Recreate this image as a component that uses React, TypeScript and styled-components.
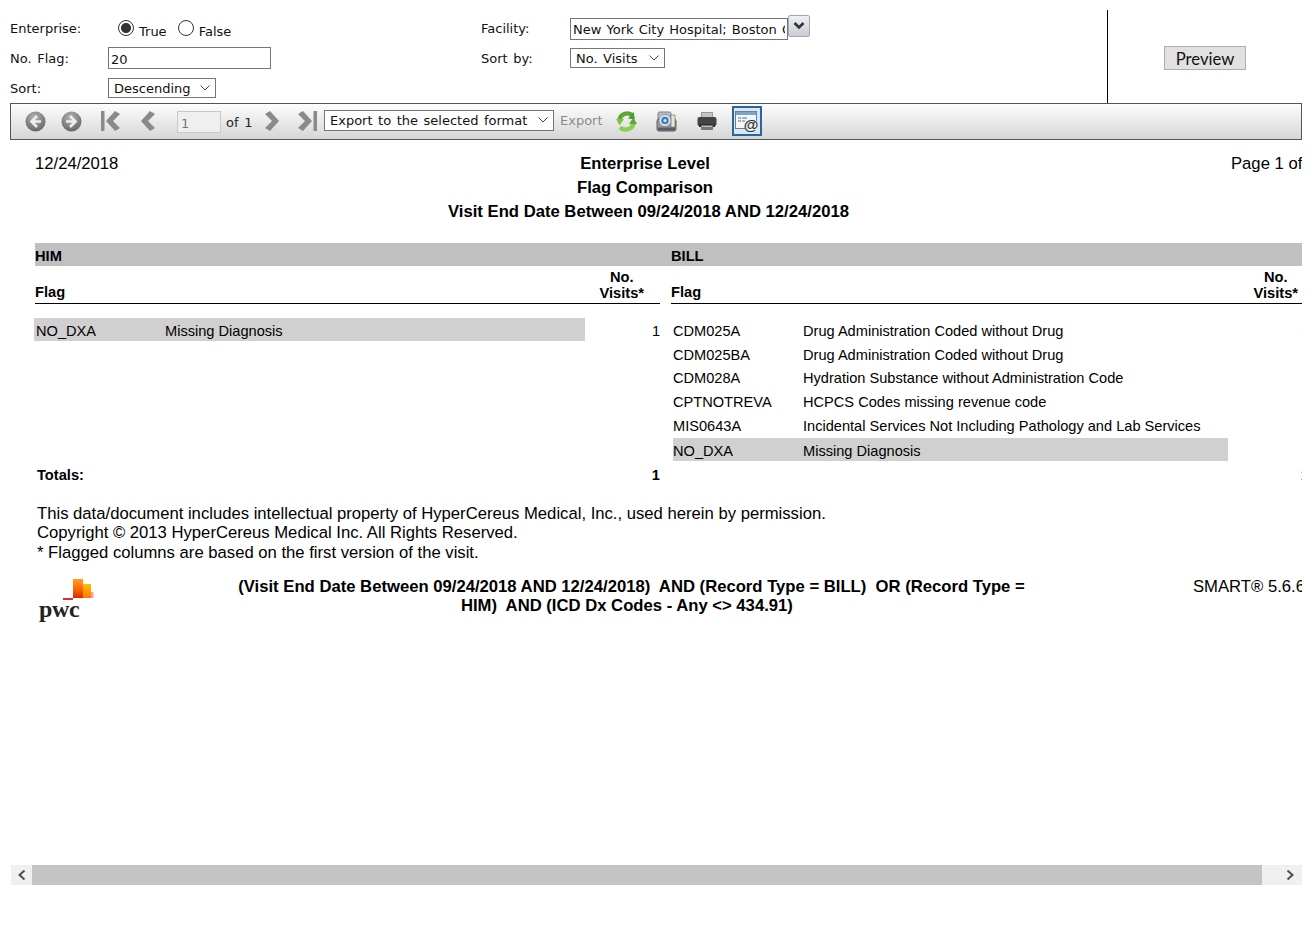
import React from 'react'
import styled, { createGlobalStyle } from 'styled-components'

const GlobalStyle = createGlobalStyle`
  html, body {
    margin: 0;
    padding: 0;
    background: #fff;
    overflow: hidden;
  }
`

const Page = styled.div`
  width: 1302px;
  height: 937px;
  padding: 10px 0 0 10px;
  box-sizing: border-box;
  overflow: hidden;
`

const Params = styled.div`
  display: flex;
  height: 93px;
  font-family: 'DejaVu Sans', Verdana, sans-serif;
  font-size: 13px;
  word-spacing: 1.5px;
  color: #111;
`

const ParamGrid = styled.div`
  width: 1097px;
  padding-top: 3px;
  box-sizing: border-box;
  display: grid;
  grid-template-columns: 98px 373px 89px 1fr;
  grid-auto-rows: 30px;
  align-items: center;
`

const Label = styled.label`
  display: block;
`

const RadioRow = styled.div`
  display: flex;
  align-items: center;
  padding: 2px 0 0 10px;
`

const Radio = styled.input.attrs({ type: 'radio' })`
  appearance: none;
  width: 16px;
  height: 16px;
  margin: 0 5px 0 0;
  box-sizing: border-box;
  border: 1px solid #333;
  border-radius: 50%;
  background: #fff;
  position: relative;
  top: -1px;
  &:checked {
    background: radial-gradient(circle, #333 0 4.6px, #fff 5.4px);
  }
`

const RadioText = styled.span<{ $gap?: number }>`
  margin-right: ${p => p.$gap ?? 0}px;
  padding-top: 5px;
`

const TextInput = styled.input`
  display: block;
  width: ${p => p.width}px;
  height: 22px;
  box-sizing: border-box;
  border: 1px solid #767676;
  border-radius: 0;
  padding: 2px 2px 0;
  font: 13px 'DejaVu Sans', Verdana, sans-serif;
  word-spacing: 1px;
  color: #111;
  outline: none;
`

const FacilityRow = styled.div`
  display: flex;
  align-items: flex-start;
  padding-top: 1px;
`

const DropButton = styled.div`
  width: 22px;
  height: 22px;
  margin-top: -3px;
  box-sizing: border-box;
  border: 1px solid #a6a6ae;
  border-radius: 2px;
  background: linear-gradient(#f0f0f4, #c9ccd6);
  display: flex;
  align-items: center;
  justify-content: center;
`

const chevronUri =
  "url(\"data:image/svg+xml,%3Csvg xmlns='http://www.w3.org/2000/svg' width='10' height='6'%3E%3Cpath d='M0.5 0.5 L5 5 L9.5 0.5' fill='none' stroke='%23444' stroke-width='1'/%3E%3C/svg%3E\")"

const Select = styled.select<{ $w: number }>`
  display: block;
  appearance: none;
  width: ${p => p.$w}px;
  height: 20px;
  box-sizing: border-box;
  border: 1px solid #767676;
  border-radius: 0;
  padding: 0 5px;
  background: #fff ${chevronUri} no-repeat right 5px center;
  font: 13px 'DejaVu Sans', Verdana, sans-serif;
  word-spacing: 1.4px;
  color: #111;
  outline: none;
`

const PreviewPane = styled.div`
  flex: 1;
  border-left: 1px solid #000;
  display: flex;
  align-items: center;
  justify-content: center;
`

const PreviewButton = styled.button`
  width: 82px;
  height: 24px;
  margin-top: 3px;
  padding: 2px 0 0;
  box-sizing: border-box;
  border: 1px solid #adadad;
  background: #e1e1e1;
  font: 16.67px Lato, 'Open Sans', sans-serif;
  color: #111;
`

const Toolbar = styled.div`
  height: 37px;
  box-sizing: border-box;
  border: 1px solid #555;
  padding-bottom: 1px;
  background: linear-gradient(#fdfdfd, #d6d6d6);
  display: flex;
  align-items: center;
  font-family: 'DejaVu Sans', Verdana, sans-serif;
  font-size: 13px;
  color: #222;
`

const ToolSlot = styled.div<{ $x: number; $w: number; $on?: boolean }>`
  margin-left: ${p => p.$x}px;
  width: ${p => p.$w}px;
  flex: none;
  display: flex;
  align-items: center;
  justify-content: center;
  ${p => p.$on && `
    height: 30px;
    box-sizing: border-box;
    border: 2px solid #2b6699;
    background: #d6e8f7;
  `}
`

const PageInput = styled.input`
  width: 44px;
  height: 22px;
  margin: 2px 0 0 20px;
  flex: none;
  box-sizing: border-box;
  border: 1px solid #c8c8c8;
  background: #efefef;
  padding: 2px 3px 0;
  font: 13px 'DejaVu Sans', Verdana, sans-serif;
  color: #777;
  outline: none;
`

const OfText = styled.span`
  margin-left: 5px;
  width: 26px;
  flex: none;
  padding-top: 2px;
  word-spacing: 1.5px;
  white-space: nowrap;
`

const ExportLink = styled.span`
  margin: -2px 0 0 6px;
  width: 43px;
  flex: none;
  color: #8c8c8c;
`

const ExportSelect = styled(Select)`
  margin: -2px 0 0 7px;
  height: 21px;
  flex: none;
`

const Viewport = styled.div`
  height: 725px;
  overflow: hidden;
`

const Report = styled.div`
  width: 1320px;
  padding-top: 12px;
  font-family: 'Liberation Sans', Arial, sans-serif;
  color: #000;
`

const TitleBlock = styled.div`
  display: grid;
  grid-template-columns: 25px 195px 830px 1fr;
  font-size: 16.67px;
  line-height: 24px;
`

const DateText = styled.div`
  grid-column: 2;
`

const Titles = styled.div`
  grid-column: 3;
  text-align: center;
  font-weight: bold;
`

const TitleLine = styled.div<{ $shift?: number }>`
  padding-left: ${p => p.$shift ?? 0}px;
  white-space: nowrap;
`

const PageText = styled.div`
  grid-column: 4;
  padding-left: 171px;
  white-space: nowrap;
`

const Sections = styled.div`
  margin-top: 19px;
  margin-left: 25px;
  display: grid;
  grid-template-columns: 636px 638px;
`

const Section = styled.div`
  display: flex;
  flex-direction: column;
`

const Band = styled.div`
  height: 23px;
  line-height: 26px;
  background: #c0c0c0;
  font-size: 14.67px;
  font-weight: bold;
`

const HeadRow = styled.div<{ $end: number; $pad: number }>`
  height: 38px;
  box-sizing: border-box;
  margin-right: ${p => p.$end}px;
  padding-right: ${p => p.$pad}px;
  border-bottom: 1px solid #000;
  display: flex;
  justify-content: space-between;
  align-items: flex-end;
  font-size: 14.67px;
  font-weight: bold;
  line-height: 16px;
  padding-bottom: 3px;
`

const VisitsHead = styled.div`
  text-align: center;
  margin-bottom: -1px;
`

const Rows = styled.div`
  margin-top: 14px;
`

const Row = styled.div<{ $off: number; $end: number; $drop?: boolean }>`
  display: flex;
  height: 23.7px;
  margin-top: ${p => (p.$drop ? 1.5 : 0)}px;
  margin-left: ${p => p.$off}px;
  margin-right: ${p => p.$end}px;
  font-size: 14.6px;
  line-height: 26px;
`

const RowLabel = styled.div<{ $w: number; $on?: boolean; $codeW: number; $pad: number }>`
  display: grid;
  grid-template-columns: ${p => p.$codeW}px 1fr;
  width: ${p => p.$w}px;
  height: 23px;
  padding-left: ${p => p.$pad}px;
  box-sizing: border-box;
  background: ${p => (p.$on ? '#d0d0d0' : 'transparent')};
  white-space: nowrap;
`

const RowValue = styled.div`
  flex: 1;
  text-align: right;
`

const TotalRow = styled.div<{ $end: number }>`
  margin-top: 1px;
  height: 24px;
  line-height: 24px;
  margin-right: ${p => p.$end}px;
  padding-left: 2px;
  display: flex;
  justify-content: space-between;
  font-size: 14.67px;
  font-weight: bold;
`

const LeftTotal = styled(TotalRow)`
  margin-top: auto;
`

const Notice = styled.div`
  margin: 17px 0 0 27px;
  font-size: 16.67px;
  line-height: 19.5px;
`

const Footer = styled.div`
  margin-top: 15px;
  display: grid;
  grid-template-columns: 223px 797px 1fr;
`

const LogoBox = styled.div`
  padding-left: 53px;
  position: relative;
  height: 48px;
`

const LogoText = styled.span`
  position: absolute;
  left: 29px;
  top: 20px;
  font-family: 'Liberation Serif', serif;
  font-weight: bold;
  font-size: 24px;
  line-height: 24px;
  letter-spacing: -0.3px;
  color: #222;
`

const Criteria = styled.div`
  font-size: 16.67px;
  font-weight: bold;
  line-height: 19px;
  text-align: center;
  white-space: pre-wrap;
`

const Version = styled.div`
  padding-left: 163px;
  font-size: 16.67px;
  line-height: 19px;
  white-space: nowrap;
`

const ScrollBar = styled.div`
  height: 20px;
  margin-left: 1px;
  background: #f0f0f0;
  display: flex;
`

const ScrollButton = styled.div<{ $w: number; $pad?: number }>`
  width: ${p => p.$w}px;
  flex: none;
  box-sizing: border-box;
  padding-left: ${p => p.$pad ?? 0}px;
  display: flex;
  align-items: center;
  justify-content: center;
`

const ScrollThumb = styled.div`
  flex: 1;
  background: #c4c4c4;
`

const GRAY = '#8a8a8a'

const RoundArrow: React.FC<{ flip?: boolean }> = ({ flip }) => (
  <svg width="21" height="21" viewBox="0 0 21 21">
    <defs>
      <radialGradient id="ball" cx="45%" cy="30%" r="75%">
        <stop offset="0" stopColor="#b5b5b5" />
        <stop offset="1" stopColor="#5f5f5f" />
      </radialGradient>
    </defs>
    <circle cx="10.5" cy="10.5" r="10" fill="url(#ball)" />
    <path
      d="M12 5 L6.5 10.5 L12 16 M7 10.5 H16"
      fill="none"
      stroke="#eee"
      strokeWidth="2.6"
      transform={flip ? 'matrix(-1 0 0 1 21 0)' : undefined}
    />
  </svg>
)

const Chevron: React.FC<{ flip?: boolean; bar?: boolean }> = ({ flip, bar }) => (
  <svg width="21" height="22" viewBox="0 0 21 22">
    <g transform={flip ? 'matrix(-1 0 0 1 21 0)' : undefined} fill={GRAY}>
      {bar && <rect x="0" y="1" width="3.5" height="20" />}
      <path d="M14 1 L19 4 L12 11 L19 18 L14 21 L5 11 Z" />
    </g>
  </svg>
)

const RefreshIcon = () => (
  <svg width="21" height="21" viewBox="0 0 21 21">
    <path d="M3.5 9 C4 3.5 11.5 0 17 4.5" fill="none" stroke="#5aa832" strokeWidth="4.4" />
    <path d="M17.5 1 L19 8.5 L12 7.5 Z" fill="#4f9a2c" />
    <path d="M0 8 L8 8 L3.5 14.5 Z" fill="#7ac943" />
    <path d="M17.5 12 C17 17.5 9.5 21 4 16.5" fill="none" stroke="#86d04e" strokeWidth="4.4" />
    <path d="M21 13 L13 13 L17.5 6.5 Z" fill="#5aa832" />
  </svg>
)

const CameraIcon = () => (
  <svg width="21" height="21" viewBox="0 0 21 21">
    <rect x="2" y="1" width="13" height="10" rx="1.5" fill="#b8bcc2" stroke="#7c8086" />
    <rect x="1" y="8" width="19" height="12" rx="2" fill="#94989e" stroke="#5c6066" />
    <rect x="15" y="4" width="4" height="12" fill="#e8e4d0" stroke="#6a6a60" strokeWidth="0.6" />
    <circle cx="9" cy="9.5" r="6" fill="#dfe6ee" stroke="#7c8086" strokeWidth="0.7" />
    <circle cx="9" cy="9.5" r="3.8" fill="#3f7fc0" />
    <circle cx="9" cy="9.5" r="1.5" fill="#d5e6f5" />
    <rect x="2" y="16.5" width="17" height="3" fill="#5a5e64" />
  </svg>
)

const PrinterIcon = () => (
  <svg width="20" height="20" viewBox="0 0 20 20">
    <rect x="4" y="1" width="12" height="6" fill="#9a9a9a" />
    <rect x="5" y="2" width="10" height="4" fill="#c4c4c4" />
    <rect x="0.5" y="6" width="19" height="9" rx="2" fill="#444" />
    <rect x="2" y="13" width="16" height="3" fill="#2e2e2e" />
    <rect x="4" y="14" width="12" height="5" fill="#777" />
    <rect x="5" y="15" width="10" height="1" fill="#bbb" />
  </svg>
)

const MailIcon = () => (
  <svg width="24" height="24" viewBox="0 0 24 24">
    <rect x="0.5" y="2.5" width="21" height="17" fill="#f4f7fa" stroke="#6c7f92" />
    <rect x="1" y="3" width="20" height="3" fill="#7ba4cc" />
    <path d="M3 9 H6 M7 9 H12 M3 12 H6 M7 12 H10" stroke="#5b6d7d" />
    <circle cx="16" cy="16" r="7" fill="#eef1f4" />
    <text x="16" y="21" textAnchor="middle" fontSize="15" fontWeight="bold" fontFamily="'Liberation Sans', sans-serif" fill="#333">@</text>
  </svg>
)

const PwcBlocks = () => (
  <svg width="31" height="24" viewBox="0 0 31 24" style={{ display: 'block' }}>
    <defs>
      <linearGradient id="col1" x1="0" y1="0" x2="0" y2="1">
        <stop offset="0" stopColor="#ffa020" />
        <stop offset="0.5" stopColor="#ff6a00" />
        <stop offset="1" stopColor="#d42a00" />
      </linearGradient>
      <linearGradient id="col2" x1="0" y1="0" x2="0" y2="1">
        <stop offset="0" stopColor="#ffc000" />
        <stop offset="1" stopColor="#ff7a00" />
      </linearGradient>
    </defs>
    <rect x="0" y="21" width="10" height="2" fill="#e0301e" />
    <rect x="10" y="2" width="10" height="19" fill="url(#col1)" />
    <rect x="20" y="7" width="8" height="14" fill="url(#col2)" />
    <rect x="28" y="15" width="2.5" height="6" fill="#f9a0a0" />
  </svg>
)

const ScrollArrow: React.FC<{ flip?: boolean }> = ({ flip }) => (
  <svg width="8" height="10" viewBox="0 0 8 10">
    <path d={flip ? 'M1.5 0.5 L6.5 5 L1.5 9.5' : 'M6.5 0.5 L1.5 5 L6.5 9.5'} fill="none" stroke="#505050" strokeWidth="2" />
  </svg>
)

const billRows = [
  { code: 'CDM025A', name: 'Drug Administration Coded without Drug', value: '1' },
  { code: 'CDM025BA', name: 'Drug Administration Coded without Drug' },
  { code: 'CDM028A', name: 'Hydration Substance without Administration Code' },
  { code: 'CPTNOTREVA', name: 'HCPCS Codes missing revenue code' },
  { code: 'MIS0643A', name: 'Incidental Services Not Including Pathology and Lab Services' },
  { code: 'NO_DXA', name: 'Missing Diagnosis', on: true }
]

const App: React.FC = () => (
  <Page>
    <GlobalStyle />
    <Params>
      <ParamGrid>
        <Label>Enterprise:</Label>
        <RadioRow>
          <Radio name="enterprise" defaultChecked />
          <RadioText $gap={11}>True</RadioText>
          <Radio name="enterprise" />
          <RadioText>False</RadioText>
        </RadioRow>
        <Label>Facility:</Label>
        <FacilityRow>
          <TextInput width={218} readOnly value="New York City Hospital; Boston City Hospital" />
          <DropButton>
            <svg width="12" height="10" viewBox="0 0 12 10">
              <path d="M1.5 2 L6 6.5 L10.5 2" fill="none" stroke="#333" strokeWidth="2.6" />
            </svg>
          </DropButton>
        </FacilityRow>
        <Label>No. Flag:</Label>
        <TextInput width={163} readOnly value="20" />
        <Label>Sort by:</Label>
        <Select $w={95} defaultValue="visits">
          <option value="visits">No. Visits</option>
        </Select>
        <Label>Sort:</Label>
        <Select $w={108} defaultValue="desc">
          <option value="desc">Descending</option>
        </Select>
      </ParamGrid>
      <PreviewPane>
        <PreviewButton>Preview</PreviewButton>
      </PreviewPane>
    </Params>

    <Toolbar>
      <ToolSlot $x={14} $w={21}><RoundArrow /></ToolSlot>
      <ToolSlot $x={15} $w={21}><RoundArrow flip /></ToolSlot>
      <ToolSlot $x={19} $w={21}><Chevron bar /></ToolSlot>
      <ToolSlot $x={14} $w={21}><Chevron /></ToolSlot>
      <PageInput readOnly value="1" />
      <OfText>of 1</OfText>
      <ToolSlot $x={11} $w={21}><Chevron flip /></ToolSlot>
      <ToolSlot $x={12} $w={21}><Chevron flip bar /></ToolSlot>
      <ExportSelect $w={230} defaultValue="none">
        <option value="none">Export to the selected format</option>
      </ExportSelect>
      <ExportLink>Export</ExportLink>
      <ToolSlot $x={13} $w={21}><RefreshIcon /></ToolSlot>
      <ToolSlot $x={19} $w={21}><CameraIcon /></ToolSlot>
      <ToolSlot $x={19} $w={21}><PrinterIcon /></ToolSlot>
      <ToolSlot $x={15} $w={30} $on><MailIcon /></ToolSlot>
    </Toolbar>

    <Viewport>
      <Report>
        <TitleBlock>
          <DateText>12/24/2018</DateText>
          <Titles>
            <TitleLine>Enterprise Level</TitleLine>
            <TitleLine>Flag Comparison</TitleLine>
            <TitleLine $shift={7}>Visit End Date Between 09/24/2018 AND 12/24/2018</TitleLine>
          </Titles>
          <PageText>Page 1 of 1</PageText>
        </TitleBlock>

        <Sections>
          <Section>
            <Band>HIM</Band>
            <HeadRow $end={11} $pad={16}>
              <div>Flag</div>
              <VisitsHead>No.<br />Visits*</VisitsHead>
            </HeadRow>
            <Rows>
              <Row $off={-1} $end={11}>
                <RowLabel $w={551} $on $codeW={129} $pad={2}>
                  <span>NO_DXA</span>
                  <span>Missing Diagnosis</span>
                </RowLabel>
                <RowValue>1</RowValue>
              </Row>
            </Rows>
            <LeftTotal $end={11}>
              <span>Totals:</span>
              <span>1</span>
            </LeftTotal>
          </Section>
          <Section>
            <Band>BILL</Band>
            <HeadRow $end={0} $pad={11}>
              <div>Flag</div>
              <VisitsHead>No.<br />Visits*</VisitsHead>
            </HeadRow>
            <Rows>
              {billRows.map(r => (
                <Row key={r.code} $off={2} $end={0} $drop={r.on}>
                  <RowLabel $w={555} $on={r.on} $codeW={130} $pad={0}>
                    <span>{r.code}</span>
                    <span>{r.name}</span>
                  </RowLabel>
                  <RowValue>{r.value}</RowValue>
                </Row>
              ))}
            </Rows>
            <TotalRow $end={0}>
              <span />
              <span>1</span>
            </TotalRow>
          </Section>
        </Sections>

        <Notice>
          <div>This data/document includes intellectual property of HyperCereus Medical, Inc., used herein by permission.</div>
          <div>Copyright © 2013 HyperCereus Medical Inc. All Rights Reserved.</div>
          <div>* Flagged columns are based on the first version of the visit.</div>
        </Notice>

        <Footer>
          <LogoBox>
            <PwcBlocks />
            <LogoText>pwc</LogoText>
          </LogoBox>
          <Criteria>{'(Visit End Date Between 09/24/2018 AND 12/24/2018)  AND (Record Type = BILL)  OR (Record Type = HIM)  AND (ICD Dx Codes - Any <> 434.91)\u00a0\u00a0'}</Criteria>
          <Version>SMART® 5.6.6</Version>
        </Footer>
      </Report>
    </Viewport>

    <ScrollBar>
      <ScrollButton $w={21}><ScrollArrow /></ScrollButton>
      <ScrollThumb />
      <ScrollButton $w={40} $pad={16}><ScrollArrow flip /></ScrollButton>
    </ScrollBar>
  </Page>
)

export default App
